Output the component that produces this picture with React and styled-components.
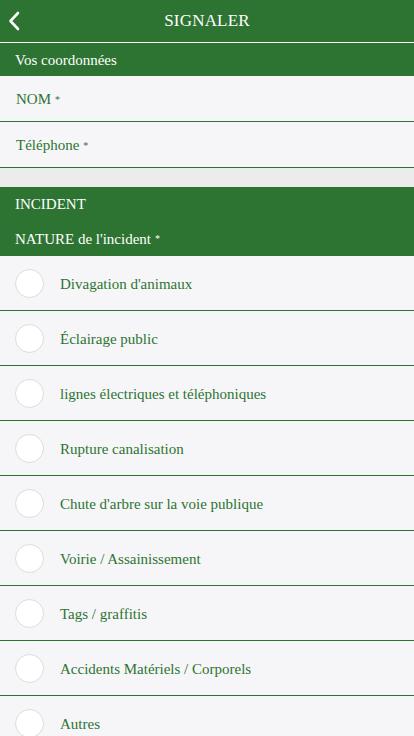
import React from "react";
import styled, { createGlobalStyle } from "styled-components";

const GREEN = "#2d7432";

const Global = createGlobalStyle`
  html, body { margin: 0; padding: 0; background: #ececec; }
  body { font-family: "Liberation Serif", "DejaVu Serif", serif; }
  * { box-sizing: border-box; }
`;

const Page = styled.div`
  width: 414px;
  min-height: 736px;
  background: #ececec;
  overflow: hidden;
`;

const TopBar = styled.header`
  height: 43px;
  background: ${GREEN};
  display: grid;
  grid-template-columns: 40px 1fr 40px;
  align-items: center;
  border-bottom: 1px solid #ffffff;
`;

const BackButton = styled.button`
  background: none;
  border: 0;
  padding: 0 0 0 8px;
  height: 100%;
  display: flex;
  align-items: center;
  cursor: pointer;
`;

const Title = styled.h1`
  margin: 0;
  text-align: center;
  color: #fff;
  font-size: 17px;
  font-weight: normal;
  letter-spacing: 0.2px;
`;

const SectionHeader = styled.div`
  background: ${GREEN};
  color: #fff;
  font-size: 15px;
  display: flex;
  flex-direction: column;
  padding: 0 15px;
`;

const HeaderLine = styled.div`
  height: ${(p) => p.$h}px;
  display: flex;
  align-items: center;
  padding-top: 1px;
`;

const Group = styled.div`
  background: #f6f6f8;
`;

const Field = styled.div`
  height: 46px;
  display: flex;
  align-items: center;
  padding: 2px 0 0 16px;
  color: ${GREEN};
  font-size: 15px;
  border-bottom: 1px solid ${GREEN};
`;

const Star = styled.sup`
  font-size: 10px;
  margin-left: 4px;
  vertical-align: 4px;
  line-height: 0;
`;

const Option = styled.label`
  height: 55px;
  display: flex;
  align-items: center;
  gap: 16px;
  padding-left: 15px;
  color: ${GREEN};
  font-size: 15px;
  border-bottom: 1px solid ${GREEN};
  &:last-child { border-bottom: 0; }
`;

const Radio = styled.span`
  width: 29px;
  height: 29px;
  border-radius: 50%;
  background: #fff;
  border: 1px solid #dcdcdc;
  flex: none;
`;

const OptionText = styled.span`
  padding-top: 2px;
`;

const Gap = styled.div`
  height: 19px;
`;

const options = [
  "Divagation d'animaux",
  "Éclairage public",
  "lignes électriques et téléphoniques",
  "Rupture canalisation",
  "Chute d'arbre sur la voie publique",
  "Voirie / Assainissement",
  "Tags / graffitis",
  "Accidents Matériels / Corporels",
  "Autres",
];

export default function App() {
  return (
    <Page>
      <Global />
      <TopBar>
        <BackButton aria-label="Retour">
          <svg width="12" height="20" viewBox="0 0 12 20">
            <path d="M10 2 L2.5 10 L10 18" stroke="#fff" strokeWidth="2.6" fill="none" strokeLinecap="round" strokeLinejoin="round" />
          </svg>
        </BackButton>
        <Title>SIGNALER</Title>
        <span />
      </TopBar>
      <SectionHeader>
        <HeaderLine $h={33}>Vos coordonnées</HeaderLine>
      </SectionHeader>
      <Group>
        <Field>NOM<Star>*</Star></Field>
        <Field>Téléphone<Star>*</Star></Field>
      </Group>
      <Gap />
      <SectionHeader>
        <HeaderLine $h={34}>INCIDENT</HeaderLine>
        <HeaderLine $h={35}>NATURE de l'incident<Star>*</Star></HeaderLine>
      </SectionHeader>
      <Group>
        {options.map((o) => (
          <Option key={o}>
            <Radio />
            <OptionText>{o}</OptionText>
          </Option>
        ))}
      </Group>
    </Page>
  );
}
